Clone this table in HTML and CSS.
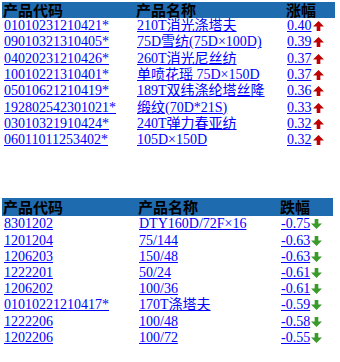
FILE: index.html
```html
<!DOCTYPE html>
<html>
<head>
<meta charset="utf-8">
<link rel="stylesheet" href="styles.css">
</head>
<body>
<table class="tbl tbl-up">
  <colgroup><col class="c1"><col class="c2"><col class="c3"></colgroup>
  <tr class="head"><th>产品代码</th><th>产品名称</th><th>涨幅</th></tr>
  <tr><td><a href="#">01010231210421*</a></td><td><a href="#">210T消光涤塔夫</a></td><td><a href="#">0.40</a><svg class="arr" viewBox="0 0 12 11"><path d="M6 0 L12 6 L8 6 L8 11 L4 11 L4 6 L0 6 Z" fill="#c00000"/></svg></td></tr>
  <tr><td><a href="#">09010321310405*</a></td><td><a href="#">75D雪纺(75D×100D)</a></td><td><a href="#">0.39</a><svg class="arr" viewBox="0 0 12 11"><path d="M6 0 L12 6 L8 6 L8 11 L4 11 L4 6 L0 6 Z" fill="#c00000"/></svg></td></tr>
  <tr><td><a href="#">04020231210426*</a></td><td><a href="#">260T消光尼丝纺</a></td><td><a href="#">0.37</a><svg class="arr" viewBox="0 0 12 11"><path d="M6 0 L12 6 L8 6 L8 11 L4 11 L4 6 L0 6 Z" fill="#c00000"/></svg></td></tr>
  <tr><td><a href="#">10010221310401*</a></td><td><a href="#">单喷花瑶 75D×150D</a></td><td><a href="#">0.37</a><svg class="arr" viewBox="0 0 12 11"><path d="M6 0 L12 6 L8 6 L8 11 L4 11 L4 6 L0 6 Z" fill="#c00000"/></svg></td></tr>
  <tr><td><a href="#">05010621210419*</a></td><td><a href="#">189T双纬涤纶塔丝隆</a></td><td><a href="#">0.36</a><svg class="arr" viewBox="0 0 12 11"><path d="M6 0 L12 6 L8 6 L8 11 L4 11 L4 6 L0 6 Z" fill="#c00000"/></svg></td></tr>
  <tr><td><a href="#">192802542301021*</a></td><td><a href="#">缎纹(70D*21S)</a></td><td><a href="#">0.33</a><svg class="arr" viewBox="0 0 12 11"><path d="M6 0 L12 6 L8 6 L8 11 L4 11 L4 6 L0 6 Z" fill="#c00000"/></svg></td></tr>
  <tr><td><a href="#">03010321910424*</a></td><td><a href="#">240T弹力春亚纺</a></td><td><a href="#">0.32</a><svg class="arr" viewBox="0 0 12 11"><path d="M6 0 L12 6 L8 6 L8 11 L4 11 L4 6 L0 6 Z" fill="#c00000"/></svg></td></tr>
  <tr><td><a href="#">06011011253402*</a></td><td><a href="#">105D×150D</a></td><td><a href="#">0.32</a><svg class="arr" viewBox="0 0 12 11"><path d="M6 0 L12 6 L8 6 L8 11 L4 11 L4 6 L0 6 Z" fill="#c00000"/></svg></td></tr>
</table>

<table class="tbl tbl-down">
  <colgroup><col class="d1"><col class="d2"><col class="d3"></colgroup>
  <tr class="head"><th>产品代码</th><th>产品名称</th><th>跌幅</th></tr>
  <tr><td><a href="#">8301202</a></td><td><a href="#">DTY160D/72F×16</a></td><td><a href="#">-0.75</a><svg class="arr" viewBox="0 0 12 11"><path d="M6 11 L12 5 L8 5 L8 0 L4 0 L4 5 L0 5 Z" fill="#3a9a2a"/></svg></td></tr>
  <tr><td><a href="#">1201204</a></td><td><a href="#">75/144</a></td><td><a href="#">-0.63</a><svg class="arr" viewBox="0 0 12 11"><path d="M6 11 L12 5 L8 5 L8 0 L4 0 L4 5 L0 5 Z" fill="#3a9a2a"/></svg></td></tr>
  <tr><td><a href="#">1206203</a></td><td><a href="#">150/48</a></td><td><a href="#">-0.63</a><svg class="arr" viewBox="0 0 12 11"><path d="M6 11 L12 5 L8 5 L8 0 L4 0 L4 5 L0 5 Z" fill="#3a9a2a"/></svg></td></tr>
  <tr><td><a href="#">1222201</a></td><td><a href="#">50/24</a></td><td><a href="#">-0.61</a><svg class="arr" viewBox="0 0 12 11"><path d="M6 11 L12 5 L8 5 L8 0 L4 0 L4 5 L0 5 Z" fill="#3a9a2a"/></svg></td></tr>
  <tr><td><a href="#">1206202</a></td><td><a href="#">100/36</a></td><td><a href="#">-0.61</a><svg class="arr" viewBox="0 0 12 11"><path d="M6 11 L12 5 L8 5 L8 0 L4 0 L4 5 L0 5 Z" fill="#3a9a2a"/></svg></td></tr>
  <tr><td><a href="#">01010221210417*</a></td><td><a href="#">170T涤塔夫</a></td><td><a href="#">-0.59</a><svg class="arr" viewBox="0 0 12 11"><path d="M6 11 L12 5 L8 5 L8 0 L4 0 L4 5 L0 5 Z" fill="#3a9a2a"/></svg></td></tr>
  <tr><td><a href="#">1222206</a></td><td><a href="#">100/48</a></td><td><a href="#">-0.58</a><svg class="arr" viewBox="0 0 12 11"><path d="M6 11 L12 5 L8 5 L8 0 L4 0 L4 5 L0 5 Z" fill="#3a9a2a"/></svg></td></tr>
  <tr><td><a href="#">1202206</a></td><td><a href="#">100/72</a></td><td><a href="#">-0.55</a><svg class="arr" viewBox="0 0 12 11"><path d="M6 11 L12 5 L8 5 L8 0 L4 0 L4 5 L0 5 Z" fill="#3a9a2a"/></svg></td></tr>
</table>
</body>
</html>
```
FILE: styles.css
```css
html, body {
  margin: 0;
  padding: 0;
  background: #ffffff;
}
body {
  font-family: "Liberation Serif", "Noto Sans CJK SC", serif;
  font-size: 14px;
}
.tbl {
  border-collapse: collapse;
  table-layout: fixed;
  margin-left: 2px;
}
.tbl-up {
  width: 333px;
  margin-top: 2px;
}
.tbl-down {
  width: 331px;
  margin-top: 50px;
}
.c1 { width: 133px; }
.c2 { width: 150px; }
.c3 { width: 50px; }
.d1 { width: 135px; }
.d2 { width: 142px; }
.d3 { width: 54px; }
.tbl td {
  padding: 0 0 0 2px;
  text-align: left;
  white-space: nowrap;
  vertical-align: middle;
}
.head th {
  padding: 0 0 0 1px;
  text-align: left;
  white-space: nowrap;
  vertical-align: middle;
  background: #1f6bb0;
  color: #000;
  font-family: "Noto Sans CJK SC", sans-serif;
  font-weight: bold;
  font-size: 15px;
  height: 16px;
  line-height: 16px;
}
.tbl-down .head th {
  height: 18px;
  line-height: 18px;
}
.tbl-up td {
  height: 16.3px;
  line-height: 16px;
}
.tbl-down td {
  height: 16.2px;
  line-height: 16px;
}
.tbl a {
  color: #0000ff;
  text-decoration: underline;
}
.arr {
  width: 11px;
  height: 10px;
  vertical-align: -1px;
  margin-left: 1px;
}
```
